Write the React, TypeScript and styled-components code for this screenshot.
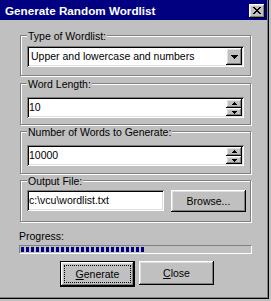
import React from "react";
import styled, { createGlobalStyle } from "styled-components";

const Global = createGlobalStyle`
  html, body { margin: 0; padding: 0; background: #c0c0c0; }
  body {
    font-family: "Liberation Sans", Arial, sans-serif;
    font-size: 10.5px;
    color: #000;
    -webkit-font-smoothing: none;
  }
  #root { width: 271px; height: 301px; overflow: hidden; }
`;

const Window = styled.div`
  width: 269px;
  height: 299px;
  box-sizing: border-box;
  background: #c0c0c0;
  border-right: 1px solid #000;
  border-bottom: 1px solid #000;
  box-shadow: inset -1px -1px 0 #808080;
  display: flex;
  flex-direction: column;
  overflow: hidden;
`;

const TitleBar = styled.div`
  height: 20px;
  flex: none;
  background: #000080;
  color: #fff;
  display: flex;
  align-items: flex-start;
  padding-left: 5px;
  margin-right: 1px;
`;

const TitleText = styled.span`
  font-weight: bold;
  font-size: 11.7px;
  line-height: 20px;
  margin-top: 1px;
  white-space: nowrap;
`;

const bevelRaised = `
  background: #c0c0c0;
  box-shadow: inset -1px -1px 0 #000, inset 1px 1px 0 #fff,
    inset -2px -2px 0 #808080, inset 2px 2px 0 #dfdfdf;
`;

const CloseBox = styled.div`
  ${bevelRaised}
  width: 16px;
  height: 14px;
  margin-left: auto;
  margin-right: 2px;
  margin-top: 4px;
  display: flex;
  align-items: flex-start;
  justify-content: flex-start;
  box-sizing: border-box;
  padding: 3px 0 0 4px;
`;

const Body = styled.div`
  padding: 15px 0 0 20px;
  display: flex;
  flex-direction: column;
`;

const Group = styled.div<{ $pt: number; $pb: number; $mt: number; $pr?: number }>`
  position: relative;
  width: 231px;
  box-sizing: border-box;
  border: 1px solid #808080;
  box-shadow: inset 1px 1px 0 #fff, 1px 1px 0 #fff;
  padding: ${(p) => p.$pt}px ${(p) => p.$pr ?? 6}px ${(p) => p.$pb}px 6px;
  margin-top: ${(p) => p.$mt}px;
`;

const GroupLabel = styled.span`
  position: absolute;
  left: 6px;
  top: -6px;
  padding: 0 1px;
  background: #c0c0c0;
  line-height: 13px;
  white-space: nowrap;
`;

const Field = styled.div<{ $w: number }>`
  width: ${(p) => p.$w}px;
  height: 21px;
  box-sizing: border-box;
  padding: 2px;
  background: #fff;
  box-shadow: inset 1px 1px 0 #808080, inset -1px -1px 0 #fff,
    inset 2px 2px 0 #000, inset -2px -2px 0 #dfdfdf;
  display: flex;
  align-items: stretch;
`;

const FieldText = styled.span<{ $pl: number }>`
  flex: 1;
  padding-left: ${(p) => p.$pl}px;
  line-height: 17px;
  white-space: nowrap;
  overflow: hidden;
`;

const DropButton = styled.div`
  ${bevelRaised}
  width: 16px;
  height: 17px;
  flex: none;
  display: flex;
  align-items: center;
  justify-content: center;
`;

const SpinColumn = styled.div`
  width: 16px;
  flex: none;
  display: flex;
  flex-direction: column;
`;

const SpinButton = styled.div<{ $h: number }>`
  ${bevelRaised}
  height: ${(p) => p.$h}px;
  display: flex;
  align-items: center;
  justify-content: center;
`;

const Row = styled.div<{ $gap: number }>`
  display: flex;
  align-items: flex-start;
  gap: ${(p) => p.$gap}px;
`;

const PushButton = styled.div<{ $w: number; $h: number; $default?: boolean }>`
  width: ${(p) => p.$w}px;
  height: ${(p) => p.$h}px;
  box-sizing: border-box;
  background: #c0c0c0;
  display: flex;
  align-items: center;
  justify-content: center;
  white-space: nowrap;
  position: relative;
  ${(p) =>
    p.$default
      ? `border: 1px solid #000;
         box-shadow: inset -1px -1px 0 #000, inset 1px 1px 0 #fff,
           inset -2px -2px 0 #808080, inset 2px 2px 0 #dfdfdf;`
      : `box-shadow: inset -1px -1px 0 #000, inset 1px 1px 0 #fff,
           inset -2px -2px 0 #808080, inset 2px 2px 0 #dfdfdf;`}
`;

const FocusRing = styled.span`
  position: absolute;
  inset: 3px;
  border: 1px dotted #000;
`;

const ProgressLabel = styled.div`
  margin: 8px 0 0 -1px;
  line-height: 13px;
`;

const ProgressTrack = styled.div`
  margin: 2px 0 0 -1px;
  width: 233px;
  height: 9px;
  box-sizing: border-box;
  border: 1px solid;
  border-color: #808080 #fff #fff #808080;
  padding: 1px;
  display: flex;
  gap: 2px;
`;

const Chunk = styled.span`
  width: 3px;
  height: 100%;
  background: #000080;
  flex: none;
`;

const ButtonRow = styled.div`
  display: flex;
  gap: 4px;
  margin: 7px 0 0 40px;
`;

const CloseGlyph = () => (
  <svg width="8" height="7" viewBox="0 0 8 7" shapeRendering="crispEdges">
    <path
      d="M0 0h2v1h1v1h2V1h1V0h2v1H7v1H6v1H5v1h1v1h1v1h1v1H6V6H5V5H3v1H2v1H0V6h1V5h1V4h1V3H2V2H1V1H0z"
      fill="#000"
    />
  </svg>
);

const DownArrow = () => (
  <svg width="7" height="4" viewBox="0 0 7 4" shapeRendering="crispEdges">
    <path d="M0 0h7v1H6v1H5v1H4v1H3V3H2V2H1V1H0z" fill="#000" />
  </svg>
);

const SpinUp = () => (
  <svg width="5" height="3" viewBox="0 0 5 3" shapeRendering="crispEdges">
    <path d="M2 0h1v1h1v1h1v1H0V2h1V1h1z" fill="#000" />
  </svg>
);

const SpinDown = () => (
  <svg width="5" height="3" viewBox="0 0 5 3" shapeRendering="crispEdges">
    <path d="M0 0h5v1H4v1H3v1H2V2H1V1H0z" fill="#000" />
  </svg>
);

const SpinField = ({ value }: { value: string }) => (
  <Field $w={217}>
    <FieldText $pl={0}>{value}</FieldText>
    <SpinColumn>
      <SpinButton $h={9}>
        <SpinUp />
      </SpinButton>
      <SpinButton $h={8}>
        <SpinDown />
      </SpinButton>
    </SpinColumn>
  </Field>
);

export default function App() {
  const chunks = Array.from({ length: 25 });
  return (
    <>
      <Global />
      <Window>
        <TitleBar>
          <TitleText>Generate Random Wordlist</TitleText>
          <CloseBox>
            <CloseGlyph />
          </CloseBox>
        </TitleBar>
        <Body>
          <Group $pt={10} $pb={8} $mt={0}>
            <GroupLabel>Type of Wordlist:</GroupLabel>
            <Field $w={217}>
              <FieldText $pl={2}>Upper and lowercase and numbers</FieldText>
              <DropButton>
                <DownArrow />
              </DropButton>
            </Field>
          </Group>
          <Group $pt={13} $pb={6} $mt={7}>
            <GroupLabel>Word Length:</GroupLabel>
            <SpinField value="10" />
          </Group>
          <Group $pt={13} $pb={7} $mt={6}>
            <GroupLabel>Number of Words to Generate:</GroupLabel>
            <SpinField value="10000" />
          </Group>
          <Group $pt={9} $pb={9} $mt={6} $pr={4}>
            <GroupLabel>Output File:</GroupLabel>
            <Row $gap={7}>
              <Field $w={137}>
                <FieldText $pl={0}>c:\vcu\wordlist.txt</FieldText>
              </Field>
              <PushButton $w={75} $h={22}>Browse...</PushButton>
            </Row>
          </Group>
          <ProgressLabel>Progress:</ProgressLabel>
          <ProgressTrack>
            {chunks.map((_, i) => (
              <Chunk key={i} />
            ))}
          </ProgressTrack>
          <ButtonRow>
            <PushButton $w={75} $h={26} $default>
              <FocusRing />
              <span>
                <u>G</u>enerate
              </span>
            </PushButton>
            <PushButton $w={75} $h={24}>
              <span>
                <u>C</u>lose
              </span>
            </PushButton>
          </ButtonRow>
        </Body>
      </Window>
    </>
  );
}
